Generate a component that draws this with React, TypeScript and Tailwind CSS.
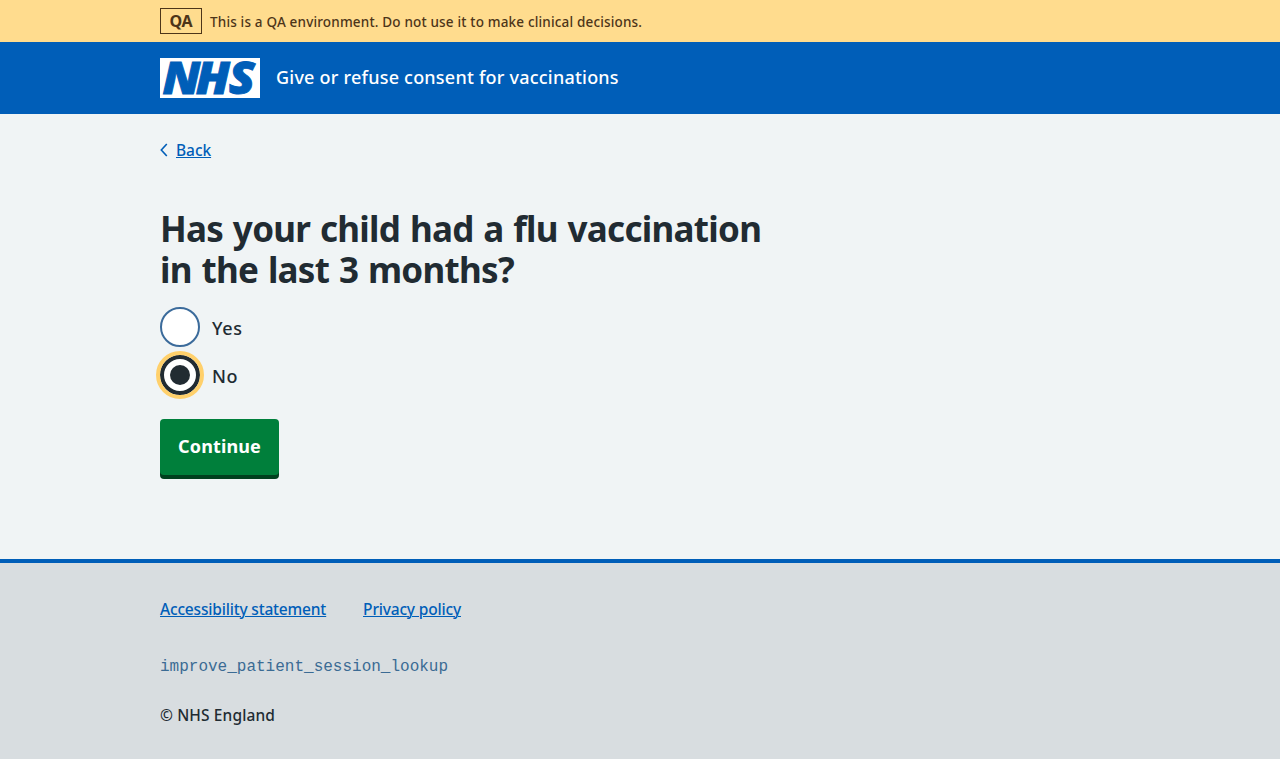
import type { ReactNode } from "react";

function Container({ children, className = "" }: { children: ReactNode; className?: string }) {
  return <div className={`mx-auto w-full max-w-[960px] ${className}`}>{children}</div>;
}

function EnvironmentBanner() {
  return (
    <div className="h-[42px] bg-[#ffdc8e] text-[#4d3519]">
      <Container className="flex h-full items-center gap-2">
        <strong className="flex h-[26px] w-[42px] items-center justify-center border border-[#4d3519] text-base leading-6 font-bold tracking-[-0.2px]">
          QA
        </strong>
        <span className="pt-px text-[13.5px] leading-5 font-medium tracking-[0.17px]">
          This is a QA environment. Do not use it to make clinical decisions.
        </span>
      </Container>
    </div>
  );
}

function NhsLogo() {
  return (
    <svg width="100" height="40" viewBox="0 0 100 40" role="img" aria-label="NHS">
      <rect width="100" height="40" fill="#fff" />
      <text
        x="2.2 32.4 62.4"
        y="35.8"
        transform="scale(1.1 1)"
        fill="#005eb8"
        stroke="#005eb8"
        strokeWidth="0.9"
        fontFamily="'Open Sans', sans-serif"
        fontWeight="800"
        fontStyle="italic"
        fontSize="43.5"
      >
        NHS
      </text>
    </svg>
  );
}

function Header() {
  return (
    <header className="h-[72px] bg-[#005eb8] text-white">
      <Container className="flex h-full items-center gap-4">
        <NhsLogo />
        <span className="pb-0.5 text-lg leading-7 font-medium tracking-[0.22px]">
          Give or refuse consent for vaccinations
        </span>
      </Container>
    </header>
  );
}

function BackLink() {
  return (
    <a href="#" className="flex h-6 w-fit items-center text-[#005eb8]">
      <svg width="8" height="14" viewBox="0 0 8 14" fill="none" className="mr-2 mb-px">
        <path d="M6.8 1 1.3 7l5.5 6" stroke="#005eb8" strokeWidth="1.6" />
      </svg>
      <span className="text-[15.5px] leading-6 font-medium tracking-[-0.05px] underline decoration-1 underline-offset-1">
        Back
      </span>
    </a>
  );
}

function Radio({ label, checked = false }: { label: string; checked?: boolean }) {
  return (
    <label className="flex h-10 items-center gap-3">
      <input type="radio" name="vaccinated" defaultChecked={checked} className="sr-only" />
      <span
        className={
          checked
            ? "flex size-10 items-center justify-center rounded-full border-4 border-[#212b32] bg-white outline-4 outline-[#ffd06b]"
            : "size-10 rounded-full border-2 border-[#3b6b9b] bg-white"
        }
      >
        {checked && <span className="size-5 rounded-full bg-[#212b32]" />}
      </span>
      <span className="pt-0.5 text-lg leading-7 font-medium tracking-[0.6px]">{label}</span>
    </label>
  );
}

function Footer() {
  return (
    <footer className="flex-1 border-t-4 border-[#005eb8] bg-[#d8dde0]">
      <Container className="pt-[34px]">
        <nav className="flex h-6 gap-[37px] text-[15.5px] leading-6 font-medium tracking-[-0.18px] text-[#005eb8] underline decoration-1 underline-offset-1">
          <a href="#">Accessibility statement</a>
          <a href="#">Privacy policy</a>
        </nav>
        <p className="mt-[34px] font-['Liberation_Mono',monospace] text-base text-[#3b6b94]">
          improve_patient_session_lookup
        </p>
        <p className="mt-6 text-[15.5px] leading-6 font-medium tracking-[0.12px]">© NHS England</p>
      </Container>
    </footer>
  );
}

export default function App() {
  return (
    <div className="flex h-[759px] flex-col bg-[#f0f4f5] font-['Noto_Sans',sans-serif] text-[#212b32]">
      <EnvironmentBanner />
      <Header />
      <main className="h-[445px]">
        <Container className="pt-6">
          <BackLink />
          <h1 className="mt-[46px] text-[35px] leading-[41px] font-bold tracking-[-0.71px] [word-spacing:1.3px]">
            Has your child had a flu vaccination
            <br />
            in the last 3 months?
          </h1>
          <div className="mt-[17px] flex flex-col gap-2">
            <Radio label="Yes" />
            <Radio label="No" checked />
          </div>
          <button
            type="button"
            className="mt-6 flex h-14 w-[119px] items-center justify-center rounded-[4px] bg-[#007f3b] pb-0.5 text-lg font-bold tracking-[0.12px] text-white shadow-[0_4px_0_#00401e]"
          >
            Continue
          </button>
        </Container>
      </main>
      <Footer />
    </div>
  );
}
